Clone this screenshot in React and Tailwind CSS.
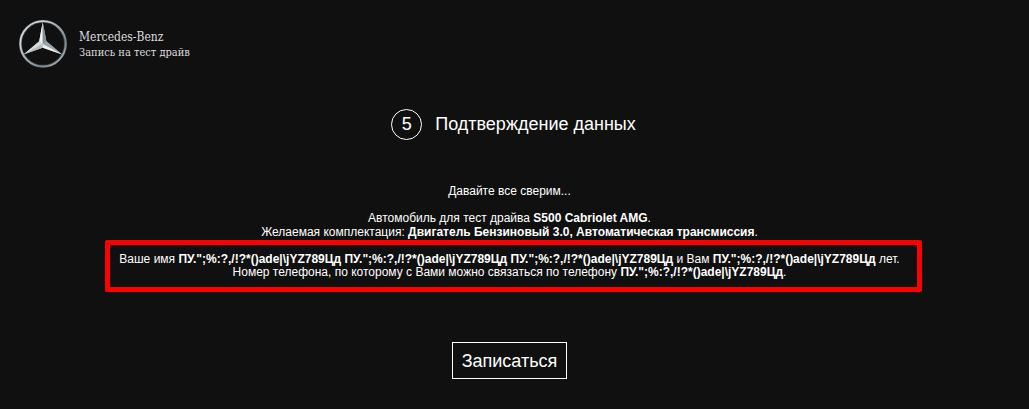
const SAMPLE = 'ПУ.";%:?,/!?*()ade|\\jYZ789Цд';

function StarLogo() {
  return (
    <svg className="h-12 w-12 shrink-0" viewBox="0 0 48 48" aria-hidden="true">
      <defs>
        <linearGradient id="ring" x1="0" y1="0" x2="1" y2="1">
          <stop offset="0" stopColor="#8b959b" />
          <stop offset="0.2" stopColor="#d5dadc" />
          <stop offset="0.5" stopColor="#a3acb1" />
          <stop offset="0.72" stopColor="#7b868c" />
          <stop offset="1" stopColor="#b9c0c4" />
        </linearGradient>
      </defs>
      <circle cx="24" cy="23.8" r="22.5" fill="none" stroke="#39434a" strokeWidth="3" />
      <circle cx="24" cy="23.8" r="22.7" fill="none" stroke="url(#ring)" strokeWidth="1.9" />
      <path d="M23.7 2 20.2 21.3 4.5 34.5 23.7 27.8 43.2 34.5 27.4 21.3Z" fill="#aeb6ba" />
      <path d="M23.7 2 20.2 21.3 23.7 24Z" fill="#f0f2f2" />
      <path d="M23.7 2 27.4 21.3 23.7 24Z" fill="#869095" />
      <path d="M20.2 21.3 4.5 34.5 23.7 24Z" fill="#d8dcde" />
      <path d="M23.7 24 4.5 34.5 23.7 27.8Z" fill="#b5bcbf" />
      <path d="M27.4 21.3 43.2 34.5 23.7 24Z" fill="#9ca5a9" />
      <path d="M23.7 24 43.2 34.5 23.7 27.8Z" fill="#f0f2f2" />
    </svg>
  );
}

export default function App() {
  return (
    <div className="min-h-screen bg-[#101010] pr-2.5 font-['Liberation_Sans',Arial,sans-serif] text-white">
      <header className="flex items-center gap-3 pt-5 pl-[19px]">
        <StarLogo />
        <div className="pt-0.5 font-['DejaVu_Serif_Condensed','DejaVu_Serif',serif] text-[#dedede]">
          <p className="text-[12px] leading-4">Mercedes-Benz</p>
          <p className="text-[11px] leading-4">Запись на тест драйв</p>
        </div>
      </header>

      <main className="flex flex-col items-center pt-10 text-center">
        <div className="flex items-center gap-[13px] pl-2 text-lg leading-8">
          <span className="flex h-[31px] w-[31px] items-center justify-center rounded-full border border-white">5</span>
          <h1>Подтверждение данных</h1>
        </div>

        <div className="mt-11 text-xs leading-[14px]">
          <p>Давайте все сверим...</p>
          <p className="mt-[13px]">
            Автомобиль для тест драйва <b>S500 Cabriolet AMG</b>.
            <br />
            Желаемая комплектация: <b>Двигатель Бензиновый 3.0, Автоматическая трансмиссия</b>.
          </p>
          <div className="relative mt-[14px]">
            <p className="leading-[13px]">
              Ваше имя <b>{SAMPLE}</b> <b>{SAMPLE}</b> <b>{SAMPLE}</b> и Вам <b>{SAMPLE}</b> лет.
              <br />
              Номер телефона, по которому с Вами можно связаться по телефону <b>{SAMPLE}</b>.
            </p>
            <div className="pointer-events-none absolute -top-[13px] -right-[22px] -bottom-[13px] -left-[14px] rounded-xs border-5 border-[#ff0000]" />
          </div>
        </div>

        <button type="button" className="mt-[63px] border border-white px-[9px] pt-[5px] pb-[3px] text-lg leading-[27px]">
          Записаться
        </button>
      </main>
    </div>
  );
}
